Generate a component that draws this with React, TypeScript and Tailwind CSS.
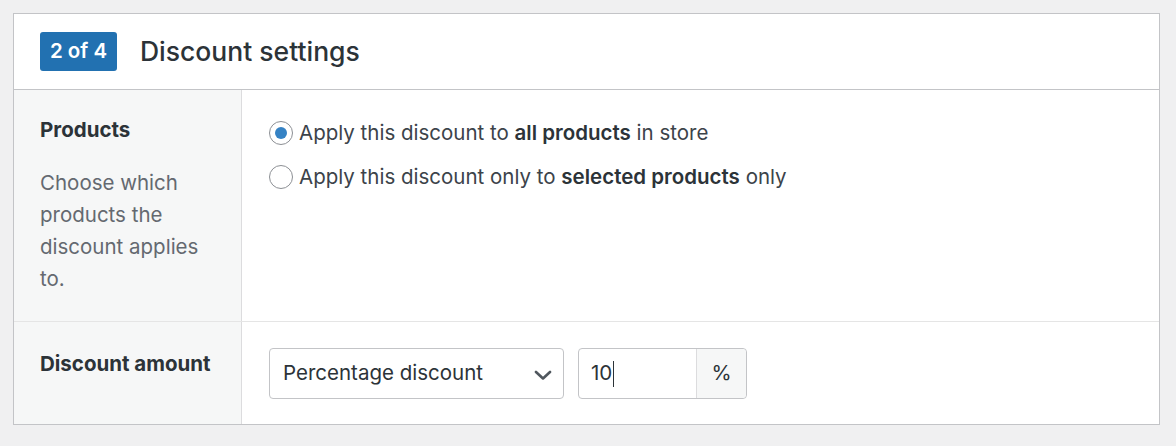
// ─── Discount settings step ─────────────────────────────────────────────────

export default function App() {
  return (
    <div
      className="min-h-[446px] bg-[#f0f0f1] px-[13px] pt-[13px] text-[#3c434a]"
      style={{ fontFamily: 'Inter, "Noto Sans", sans-serif' }}
    >
      <div className="w-[1147px] border border-[#c3c4c7] bg-white">
        {/* Header */}
        <div className="flex h-[76px] items-center gap-[23px] border-b border-[#c3c4c7] px-[26px]">
          <span className="flex h-[39px] w-[77px] items-center justify-center rounded-[3px] bg-[#2271b1] text-[20.5px] font-semibold text-white">
            2 of 4
          </span>
          <h2 className="text-[26.5px] font-medium text-[#2c3338]">Discount settings</h2>
        </div>

        {/* Products row */}
        <Row label="Products" height="h-[231px]">
          <p className="mt-[21px] text-[20.5px] leading-[32px] text-[#646970]">
            Choose which products the discount applies to.
          </p>
        </Row>

        {/* Amount row */}
        <div className="flex h-[103px] border-t border-[#e5e5e5]">
          <div className="w-[228px] border-r border-[#dcdcde] bg-[#f6f7f7] pl-[26px] pt-[27px]">
            <p className="text-[20.5px] font-bold text-[#2c3338]">Discount amount</p>
          </div>
          <div className="flex items-start gap-[14px] pl-[27px] pt-[26px]">
            <div className="flex h-[51px] w-[295px] items-center justify-between rounded-[4px] border border-[#c3c4c7] pl-[13px] pr-[11px] text-[20.5px] text-[#2c3338]">
              <span>Percentage discount</span>
              <svg width="18" height="10" viewBox="0 0 18 10" fill="none" className="mt-[2px]">
                <path d="M2 2l7 6.5L16 2" stroke="#50575e" strokeWidth="2.6" strokeLinecap="round" strokeLinejoin="round" />
              </svg>
            </div>
            <div className="flex h-[51px] w-[169px] rounded-[4px] border border-[#c3c4c7] text-[20.5px] text-[#2c3338]">
              <div className="flex flex-1 items-center pl-[12px]">
                10<span className="ml-[1px] inline-block h-[26px] w-px bg-[#2c3338]" />
              </div>
              <div className="flex w-[50px] items-center justify-center rounded-r-[4px] border-l border-[#dcdcde] bg-[#f6f7f7]">
                %
              </div>
            </div>
          </div>
        </div>
      </div>
    </div>
  );
}

// ─── Sub-components ─────────────────────────────────────────────────────────

function Row({ label, height, children }: { label: string; height: string; children: React.ReactNode }) {
  return (
    <div className={`flex ${height}`}>
      <div className="w-[228px] border-r border-[#dcdcde] bg-[#f6f7f7] pl-[26px] pr-[20px] pt-[25px]">
        <p className="text-[20.5px] font-bold text-[#2c3338]">{label}</p>
        {children}
      </div>
      <div className="flex flex-col gap-[14px] pl-[27px] pt-[28px] text-[20.5px] text-[#3c434a]">
        <Radio checked>
          Apply this discount to <b className="font-semibold text-[#2c3338]">all products</b> in store
        </Radio>
        <Radio>
          Apply this discount only to <b className="font-semibold text-[#2c3338]">selected products</b> only
        </Radio>
      </div>
    </div>
  );
}

function Radio({ checked = false, children }: { checked?: boolean; children: React.ReactNode }) {
  return (
    <label className="flex h-[30px] items-center gap-[6px]">
      <span className="flex h-[24px] w-[24px] shrink-0 items-center justify-center rounded-full border border-[#8c8f94] bg-white">
        {checked && <span className="h-[12px] w-[12px] rounded-full bg-[#3582c4]" />}
      </span>
      <span>{children}</span>
    </label>
  );
}
